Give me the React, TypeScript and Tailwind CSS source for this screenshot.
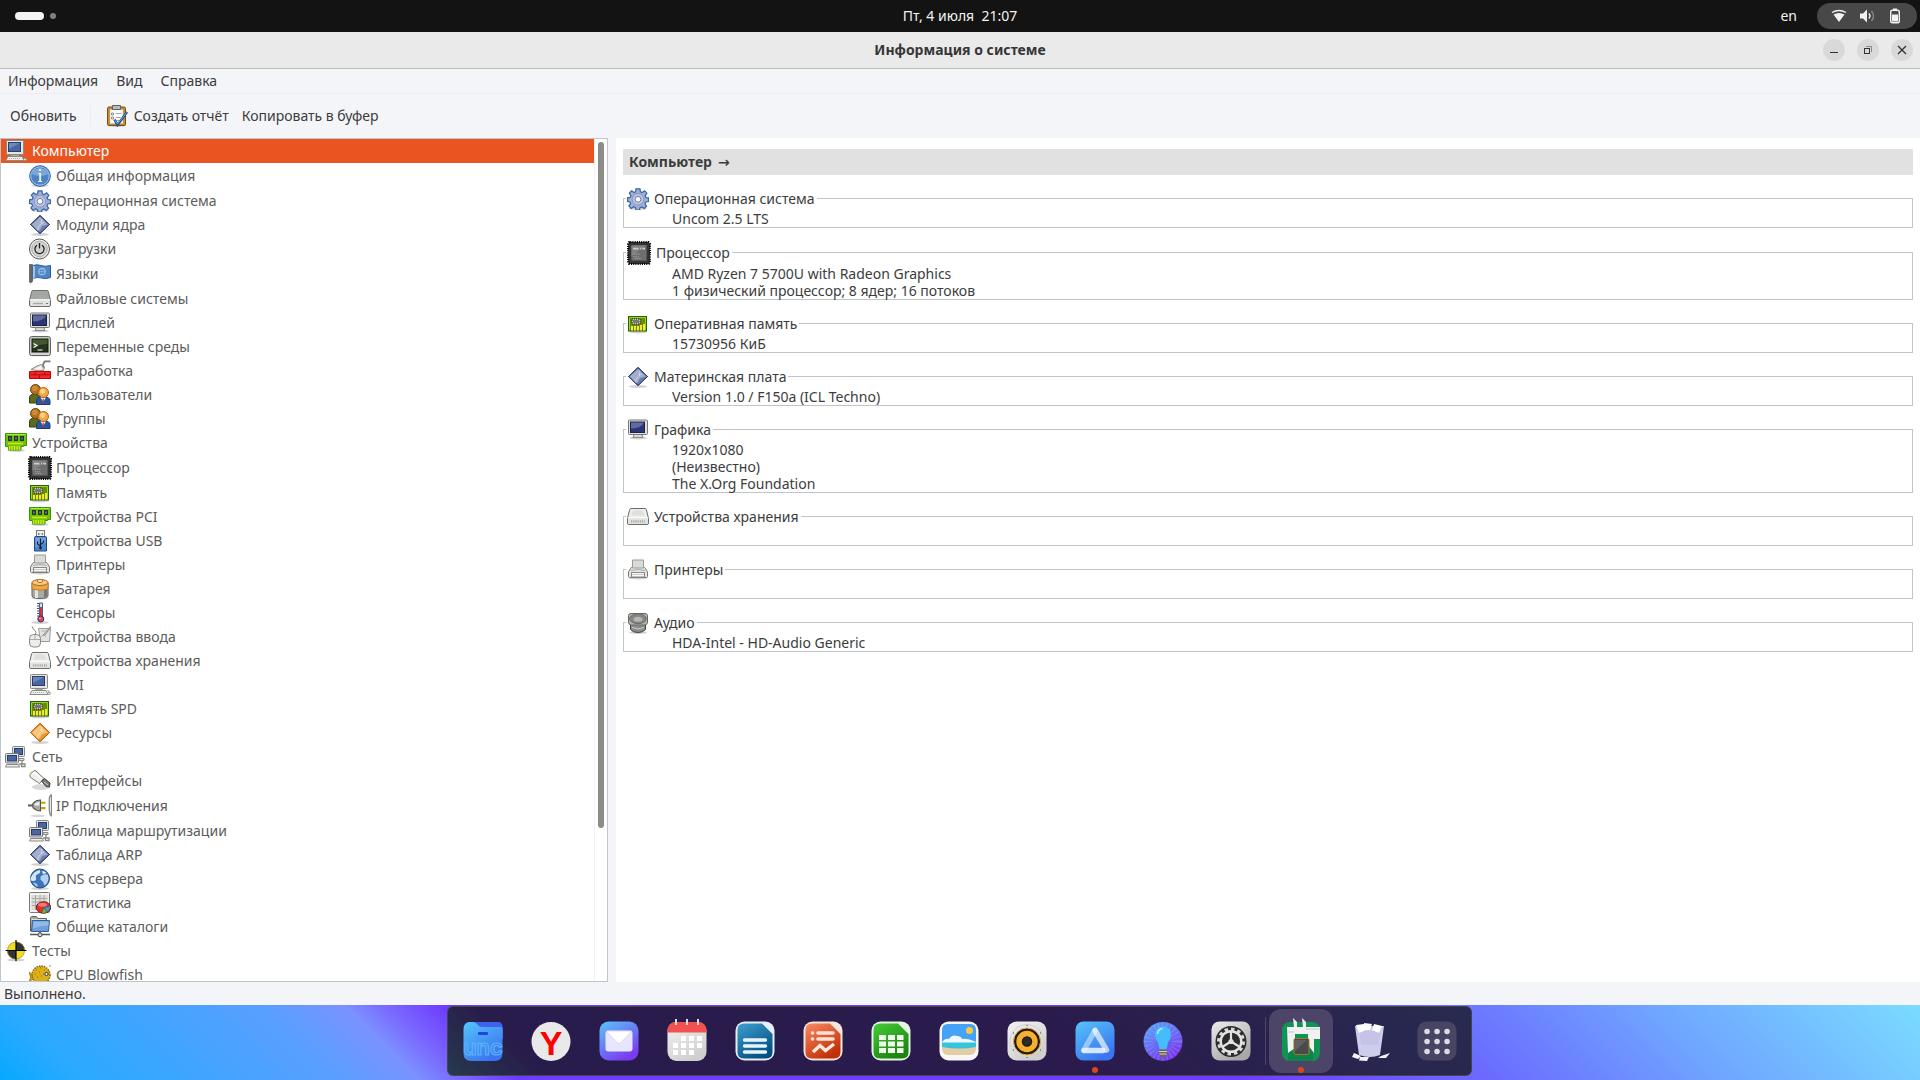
import type { ReactNode } from 'react';

type IconName = keyof typeof icons;

interface TreeItem {
  label: string;
  icon: IconName;
  top?: boolean;
  tall?: boolean;
}

interface Section {
  title: string;
  icon: IconName;
  lines: string[];
}

function Shadow({ y = 20.5 }: { y?: number }) {
  return <ellipse cx="11" cy={y} rx="9" ry="1.5" fill="#000" opacity="0.18" />;
}

function Diamond({ edge, light, dark }: { edge: string; light: string; dark: string }) {
  return (
    <>
      <Shadow />
      <path d="M11 1.5 20.5 10.5 11 19.5 1.5 10.5Z" fill={dark} stroke={edge} />
      <path d="M11 3 18.8 10.5 13 12 11 16 9 17.2 2.8 10.5Z" fill={light} />
      <path d="M13 4.5 12 9l3-1M8 16l2-4 3-3" fill="none" stroke="#fff" strokeWidth="0.8" opacity="0.6" />
      <path d="M11 1.5 20.5 10.5 11 19.5 1.5 10.5Z" fill="none" stroke={edge} />
    </>
  );
}

function Pc() {
  return (
    <>
      <rect x="1.5" y="0.5" width="17" height="14" rx="1" fill="#e6e6e1" stroke="#888a85" />
      <rect x="3.5" y="2.5" width="12" height="9" fill="#4a66a0" stroke="#2b3b6b" />
      <path d="M4 3h11L4 9Z" fill="#7d95c6" opacity="0.7" />
      <path d="M6 15h8v1.5H6Z" fill="#aaa" />
      <path d="M3 16.5h14l2 4H.8Z" fill="#eeeeec" stroke="#888a85" />
      <path d="M4 18.5h11" stroke="#aaa" strokeDasharray="1 1" />
      <path d="M18.5 16.5q2 0 2 3" fill="none" stroke="#888a85" />
      <rect x="18.5" y="18.5" width="3" height="2" rx="1" fill="#ddd" stroke="#888a85" strokeWidth="0.8" />
    </>
  );
}

function Network() {
  return (
    <>
      <rect x="7.5" y="0.5" width="12" height="10" rx="1" fill="#e6e6e1" stroke="#888a85" />
      <rect x="9.5" y="2.5" width="8" height="6" fill="#4a66a0" stroke="#2b3b6b" />
      <path d="M14 12.5h5v2h-5Z" fill="#ddd" stroke="#888a85" />
      <rect x="0.5" y="7.5" width="13" height="9.5" rx="1" fill="#e6e6e1" stroke="#777974" />
      <rect x="2.5" y="9.5" width="9" height="5.5" fill="#4a66a0" stroke="#2b3b6b" />
      <path d="M1.5 18.5h12l1 2.5H.5Z" fill="#eeeeec" stroke="#888a85" />
      <path d="M17 14v4h-3M17 18h3v2.5h-3.5V17" fill="none" stroke="#888a85" strokeWidth="1.3" />
    </>
  );
}

function Memory() {
  return (
    <>
      <Shadow y={19} />
      <rect x="1.5" y="3.5" width="18" height="14.5" fill="#6d8a06" stroke="#27610a" />
      <path d="M2.5 17V4.5h16V17" fill="none" stroke="#8fdc22" />
      <rect x="5" y="6" width="8" height="5" fill="#c9cbc6" stroke="#222" strokeDasharray="1 1" />
      <rect x="6" y="7" width="6" height="3" fill="#777974" />
      <path d="M5 13v4.5M8 13v4.5M11 13v4.5M14 12v5.5M17 11v6.5" stroke="#f5e92f" strokeWidth="2" />
    </>
  );
}

function Pci() {
  return (
    <>
      <Shadow y={18.5} />
      <path d="M.5 1.5h21v12h-3v1H16v3.500H3.500v-3.500H.5Z" fill="#6dc40c" stroke="#3f9205" />
      <path d="M1.5 2.5h19" stroke="#a6ee4c" />
      <path d="M3 4h4v5H3ZM9 4h4v5H9ZM15 4h4v5h-4Z" fill="#26352a" />
      <path d="M4.5 5.5h1v2h-1ZM10.5 5.5h1v2h-1ZM16.5 5.5h1v2h-1Z" fill="#aaa" />
      <path d="M3 11.5h15M4.5 14v4M7 14v4M9.500 14v4M12 14v4M14.5 14v4" stroke="#d6e818" strokeWidth="1.4" />
    </>
  );
}

function People() {
  return (
    <>
      <path d="M.5 19v-5q0-4 5-4 5 0 5 4v3l-4 2Z" fill="#5a6b1e" stroke="#36430b" />
      <circle cx="6.5" cy="5.5" r="5" fill="#b1701c" stroke="#6f420a" />
      <circle cx="5.8" cy="4.5" r="2.8" fill="#cf8e36" />
      <path d="M7.5 20.500V17q0-4.500 6.500-4.500 7 0 7 4.500v3.500Z" fill="#2c55a0" stroke="#1b3a78" />
      <path d="m11.5 13.500 2.700 4 2.800-4Z" fill="#fff" />
      <path d="M14.2 14.500v5" stroke="#d92b2b" strokeWidth="1.2" />
      <circle cx="14.5" cy="8.5" r="5" fill="#f3a541" stroke="#b86b12" />
      <circle cx="13.6" cy="7.3" r="2.6" fill="#fcd08c" />
    </>
  );
}

function Disk({ top }: { top: string }) {
  return (
    <>
      <path
        d="M4 2.500h14q1 0 1.300 1l2 8q.2.5.2 1V17q0 1.500-1.500 1.500H2Q.5 18.500.5 17v-4.500q0-.5.2-1l2-8q.3-1 1.300-1Z"
        fill={top}
        stroke="#6c6e6a"
      />
      <path d="M1.200 11.500h19.600V17q0 1-1 1H2.200q-1 0-1-1Z" fill="#e3e3e0" />
      <path d="M1.200 11.700h19.600" stroke="#fff" />
    </>
  );
}

const icons = {
  computer: <Pc />,
  info: (
    <>
      <Shadow />
      <circle cx="11" cy="11" r="10.300" fill="#4a84c4" stroke="#2f5f9c" />
      <circle cx="11" cy="11" r="9.200" fill="none" stroke="#a9c9ea" />
      <path d="M2.500 9a9 9 0 0 1 17 0q-8 4-17 0Z" fill="#8fb7e0" opacity="0.7" />
      <text x="11" y="17" textAnchor="middle" fontSize="18" fill="#fff" className="font-['Liberation_Serif',serif]">i</text>
    </>
  ),
  gear: (
    <>
      <Shadow />
      <path
        d="M9 .8h4l.4 3 1.800.8L17.600 2.800l2.300 2.400-1.700 2.400.8 1.900 2.500.4v3.600l-2.700.5-.8 1.800 1.600 2.400-2.300 2.300-2.400-1.600-1.900.8-.5 2.500H9l-.5-2.600-1.900-.8-2.400 1.600-2.300-2.400 1.700-2.300-.8-1.800L.5 13.400V9.800l2.600-.4.8-1.900L2.300 5.100 4.700 2.800l2.200 1.700 1.700-.7Z"
        fill="#9fb0d6"
        stroke="#3465a4"
        strokeWidth="1.2"
      />
      <circle cx="11" cy="11.300" r="5.800" fill="#c2c6dc" stroke="#8794c4" />
      <circle cx="11" cy="11.300" r="2.900" fill="#fff" stroke="#5f7db5" />
    </>
  ),
  module: <Diamond edge="#2f3f70" light="#a3aecb" dark="#6b7eb0" />,
  power: (
    <>
      <circle cx="10.5" cy="11" r="10" fill="#eeeeec" stroke="#555753" />
      <circle cx="10.5" cy="11" r="7.800" fill="#d0d0cd" stroke="#aeb0ab" />
      <path d="M8 7.200a4.600 4.600 0 1 0 5 0M10.500 5v5.500" fill="none" stroke="#222" strokeWidth="1.3" />
    </>
  ),
  flag: (
    <>
      <path d="M.5 1.500h3v17l-2 1.500-1-1Z" fill="#666" stroke="#444" strokeWidth="0.6" />
      <path d="M4 2.500q4-1.500 8 0t9.500 0v12q-5 2-9 .5t-8.500.5Z" fill="#4f87c5" stroke="#2c5c98" />
      <path d="M4 3v14l2-3V3Z" fill="#9fc2e6" />
      <circle cx="13" cy="8.500" r="3.200" fill="none" stroke="#9cc0e4" strokeWidth="1.2" />
      <path d="M10 8.500h6M13 5.500v6" stroke="#9cc0e4" strokeWidth="0.6" />
    </>
  ),
  drive: (
    <>
      <Disk top="#a5a7a3" />
      <path d="M4 15.500h10" stroke="#aaa" strokeWidth="1.5" />
      <path d="M17 15.500h2" stroke="#777" />
    </>
  ),
  display: (
    <>
      <Shadow y={19} />
      <path d="M7 15.500h8l1 3H6Z" fill="#d8d8d4" stroke="#888a85" />
      <rect x="1.5" y="1" width="19" height="14.500" rx="1" fill="#e0e0dc" stroke="#777974" />
      <rect x="3.5" y="3" width="14" height="10.500" fill="#2c3672" stroke="#1b2150" />
      <path d="M4 3.500h13Q15 9 4 9.500Z" fill="#6e78aa" opacity="0.8" />
    </>
  ),
  terminal: (
    <>
      <rect x="0.6" y="0.6" width="20.800" height="19" rx="2" fill="#d3d7cf" stroke="#555753" />
      <rect x="3" y="3" width="16" height="13" fill="#26341e" stroke="#111" />
      <path d="M3.500 3.500h15V8q-8 0-15 4Z" fill="#4b6a38" opacity="0.7" />
      <path d="m4.500 7.500 3.500 2-3.500 2M8.500 14h5" fill="none" stroke="#fff" strokeWidth="1.2" />
    </>
  ),
  develop: (
    <>
      <path d="M.5 11.500h21v7H.5Z" fill="#ef2929" stroke="#c40000" />
      <path d="M1.500 14.800h19M6 12.500v2M16 12.500v2M10.500 15.500V18" stroke="#a40000" strokeWidth="0.8" />
      <path d="M2 9.500q5-3.500 10-5l3.500 2.500-1 3.500q-5 1-12.500-1Z" fill="#dcdedb" stroke="#888a85" />
      <path d="M14.500 7.500q-1-4 1.500-6.200h5.500" fill="none" stroke="#777974" strokeWidth="1.8" />
      <path d="M12 5.500 5 9.500h8Z" fill="#fff" opacity="0.7" />
    </>
  ),
  users: <People />,
  groups: <People />,
  pci: <Pci />,
  cpu: (
    <>
      <rect x="1" y="1" width="20" height="20" rx="2" fill="#3a3a3a" stroke="#000" strokeWidth="2.4" strokeDasharray="1 1" />
      <rect x="2" y="2" width="18" height="18" rx="2" fill="#343434" />
      <rect x="4" y="4" width="14" height="14" fill="#6e6e6e" />
      <path d="M4 4h14L4 14Z" fill="#8a8a8a" opacity="0.7" />
      <path d="M5.500 7h5M12 7h1M14 7h2.500" stroke="#ccc" strokeWidth="1.5" />
      <path d="M6 12h6M6 14.500h5M7 16h6" stroke="#999" strokeDasharray="1.5 .5" />
    </>
  ),
  memory: <Memory />,
  usb: (
    <>
      <rect x="7.5" y="0.5" width="8" height="7" fill="#ededea" stroke="#777974" />
      <path d="M9 3h1.500v2H9ZM12.500 3H14v2h-1.500Z" fill="#888" />
      <path d="M5.500 7.500q0-1 1-1h10q1 0 1 1v13.500h-12Z" fill="#4f86c6" stroke="#204a87" />
      <path d="M6.500 7.500h10V13l-10 4Z" fill="#8fb6e2" opacity="0.6" />
      <path d="M11.500 8.500v10M11.500 16 8.500 14v-2.500M11.500 14.500l3-2v-2" fill="none" stroke="#10243f" strokeWidth="1.2" />
      <circle cx="11.5" cy="18" r="1.4" fill="#10243f" />
    </>
  ),
  printer: (
    <>
      <Shadow y={19} />
      <path d="M5 8.500h12q1 0 1.500 1l2 3.500v4.500q0 1-1 1h-17q-1 0-1-1V13l2-3.500q.5-1 1.500-1Z" fill="#e6e6e3" stroke="#777974" />
      <path d="M5.500 1h11v8h-11Z" fill="#d9dbd8" stroke="#9a9c97" />
      <path d="M4 11.500q7-2 14 0" fill="none" stroke="#aaa" />
      <rect x="4.5" y="13.500" width="13" height="4.500" fill="#f8f8f7" stroke="#888a85" />
      <path d="M5 15.500h12" stroke="#ccc" />
    </>
  ),
  battery: (
    <>
      <Shadow y={20} />
      <path d="M3 5v13q1 2.500 8 2.500t8-2.500V5Z" fill="#a8aaa6" stroke="#60625e" />
      <path d="M6 8v12h3V8Z" fill="#e4e4e2" />
      <path d="M15 8v12l3-2V8Z" fill="#777974" />
      <path d="M3 4.500V11q8 2.500 16 0V4.500Z" fill="#f0a740" stroke="#b4752a" strokeWidth="0.8" />
      <ellipse cx="11" cy="4.500" rx="8" ry="3" fill="#fcc780" stroke="#a8691e" />
      <ellipse cx="11" cy="3" rx="2.700" ry="1.700" fill="#ffe0ad" stroke="#b4752a" />
    </>
  ),
  sensor: (
    <>
      <Shadow y={20.5} />
      <path d="M10.500 1h3v13h-3Z" fill="#cfe0f5" stroke="#3465a4" />
      <path d="M9 1v14" stroke="#222" strokeDasharray="1 1.5" strokeWidth="1.6" />
      <path d="M12 5v10" stroke="#ef2929" strokeWidth="2" />
      <circle cx="11.800" cy="17" r="3" fill="#f23b4b" stroke="#203a78" />
      <circle cx="11" cy="16.300" r="0.9" fill="#ffb6bb" />
    </>
  ),
  input: (
    <>
      <path d="M9.500 2.500h12l-1 13h-9Z" fill="#e3e3df" stroke="#9a9c97" />
      <path d="M12 5h5M12 11q3-4 5 0" fill="none" stroke="#b4b6b1" />
      <path d="m21.500.5-6 7-1.500 2 2.500-1 5-7Z" fill="#cfcfca" stroke="#777974" strokeWidth="0.7" />
      <path d="M3 .5q1 3 3 4t0 5" fill="none" stroke="#888a85" />
      <rect x="0.5" y="8.500" width="11" height="12.500" rx="4" fill="#ededea" stroke="#888a85" />
      <path d="M1 13.500h10M6 9v4" stroke="#aaa" />
    </>
  ),
  storage: (
    <>
      <Disk top="#eeeeec" />
      <path d="M6 4.500q8-1.500 10 1l1.500 4h-13Z" fill="#dfdfdb" />
      <path d="M4 15.500h14" stroke="#aaa" strokeWidth="2.5" strokeDasharray="1.2 1" />
    </>
  ),
  resources: <Diamond edge="#c06412" light="#fac47a" dark="#f0962c" />,
  network: <Network />,
  cable: (
    <>
      <ellipse cx="12" cy="17" rx="9" ry="3" fill="#000" opacity="0.15" />
      <path d="M1 4.500 5 .8q1-.5 2 .2l8 7.500-4.500 5L1.500 7.500Q.5 6 1 4.500Z" fill="#eeeeec" stroke="#777974" />
      <path d="m2.500 4.500 2.500-2 8 6.500" fill="none" stroke="#fff" strokeWidth="1.5" />
      <path d="M3.500 1.500 1 4" stroke="#d7b53a" strokeWidth="1.2" />
      <path d="m12.500 11 3-2.500 5.500 4.500-.5 4-3.500-.5Z" fill="#777974" stroke="#3f403e" />
      <path d="m15 12 4 3" stroke="#ccc" />
    </>
  ),
  plug: (
    <>
      <ellipse cx="9" cy="20" rx="7" ry="1.200" fill="#000" opacity="0.15" />
      <path d="M0 10.500h6" stroke="#666" strokeWidth="2" />
      <path d="M4.500 8.500q3-3 7-3v10q-4 0-7-3Z" fill="#a9aba7" stroke="#555753" />
      <path d="M6 9q2-1.700 4.500-2v3.500H6Z" fill="#eee" />
      <path d="M12 8h4M12 13h4" stroke="#c4a000" strokeWidth="2" />
      <path d="M21.500.5v20M21.500.5q-2 1-2 5v9q0 4 2 6" fill="none" stroke="#888a85" strokeWidth="1.2" />
    </>
  ),
  globe: (
    <>
      <Shadow />
      <circle cx="11" cy="10.500" r="9.500" fill="#3d74b8" stroke="#204a87" />
      <path d="M2 9q3-6 9-7 1 3-2 4t-2 4-3 3-2-4Z" fill="#d6e6f6" />
      <path d="M12 8q4-3 7-1l.5 4q-1 5-4 6.500-1-4-3-5T12 8Z" fill="#b5d0ee" />
      <path d="M4 15q4-1 5 4-3-1-5-4Z" fill="#a9c9ea" />
      <path d="M13 3q3 0 4.500 2L14 6Z" fill="#eaf2fb" />
    </>
  ),
  stats: (
    <>
      <rect x="0.5" y="0.5" width="20" height="20" rx="1" fill="#f1f1ef" stroke="#777974" />
      <path d="M2.500 3h16v15h-16Z" fill="#dcdcd8" />
      <path d="M2.500 6.500h16M2.500 10h16M2.500 13.500h16M6.500 3v15M11 3v15M15 3v15" stroke="#a8aaa6" />
      <ellipse cx="14.500" cy="15.500" rx="7.300" ry="5.700" fill="#d93030" stroke="#8c1010" />
      <ellipse cx="13.500" cy="12.800" rx="4.500" ry="2" fill="#f58a8a" opacity="0.8" />
      <path d="m15 15.500 6.300-1.500q.5 4-3.500 6.500Z" fill="#5b8cc8" stroke="#27508c" strokeWidth="0.6" />
      <path d="m15 15.500 2.800 5q-3 1-5 .5Z" fill="#73c13a" stroke="#2f6d10" strokeWidth="0.6" />
    </>
  ),
  shared: (
    <>
      <path d="M1.500 15V1.500l1-1h5l1.500 2h8.500V15Z" fill="#a8aaa6" stroke="#60625e" />
      <path d="M2.500 3.500h14" stroke="#ddd" />
      <path d="M3.500 4.500h17l-1 11H2.500Z" fill="#6f9fd8" stroke="#2f5f9c" />
      <path d="M4.500 5.500h15v4q-8 0-15.500 3Z" fill="#a6c6ec" opacity="0.7" />
      <path d="M1 18.500h20M11 16v2" stroke="#555753" strokeWidth="1.5" />
      <circle cx="11" cy="18.800" r="2" fill="#ddd" stroke="#444" />
    </>
  ),
  benchmark: (
    <>
      <Shadow y={20} />
      <circle cx="11" cy="10.500" r="8.800" fill="#f2dc20" />
      <path d="M11 10.500V1.700a8.800 8.800 0 0 1 8.800 8.800ZM11 10.500v8.800a8.800 8.800 0 0 1-8.800-8.800Z" fill="#2e3436" />
      <circle cx="11" cy="10.500" r="8.500" fill="none" stroke="#8d8424" strokeWidth="0.6" />
      <path d="M11 0v21M.5 10.500h21" stroke="#000" strokeWidth="1.2" />
    </>
  ),
  blowfish: (
    <>
      <path d="M4 11 0 8l1.500 5L.5 17l4-2Z" fill="#d9a90c" stroke="#8a6a08" strokeWidth="0.7" />
      <circle cx="12" cy="11" r="9" fill="#d4a50d" stroke="#8a6a08" strokeDasharray="1.5 1" strokeWidth="1.5" />
      <circle cx="12" cy="11" r="8" fill="#dcb01a" />
      <path d="M7 6h1M11 4h1M15 6h1M6 10h1M10 8h1M14 10h1M8 13h1M12 12h1" stroke="#8a6a08" strokeWidth="1.2" />
      <circle cx="17.500" cy="10" r="1.600" fill="#fff" stroke="#333" />
      <path d="M21 1v2" stroke="#888" />
    </>
  ),
  audio: (
    <>
      <Shadow />
      <path d="M3.500 11v6.500q2.500 3 7.500 3t7.500-3V11Z" fill="#8b8d89" stroke="#444" />
      <path d="M5 15.500q6 3 12 0" fill="none" stroke="#ccc" />
      <path d="M4 1.500h14q2.500 0 2.500 2v6.500q0 3-3 3h-13q-3 0-3-3V3.500q0-2 2.500-2Z" fill="#b5b7b3" stroke="#666864" />
      <ellipse cx="11" cy="6.800" rx="8.300" ry="4.900" fill="#858783" stroke="#6a6c68" />
      <ellipse cx="11" cy="7.300" rx="4.500" ry="2.500" fill="#b4b6b2" />
    </>
  ),
  report: (
    <>
      <Shadow y={20.5} />
      <rect x="1.5" y="2" width="18" height="18.500" rx="1.500" fill="#c98a26" stroke="#7d4e0a" />
      <rect x="4" y="4.500" width="13" height="14" fill="#fff" stroke="#b9bbb7" strokeWidth="0.6" />
      <path d="M6.500.5h8v4h-8Z" fill="#b9bbb7" stroke="#60625e" />
      <path d="M5.500 8h2v2h-2ZM5.500 12h2v2h-2Z" fill="none" stroke="#777" strokeWidth="0.8" />
      <path d="M9.500 8.500h6M9.500 12.500h5M9.500 15.500h4" stroke="#aaa" />
      <path d="m8.500 14.500 3 5.500L21 7" fill="none" stroke="#27508c" strokeWidth="2.6" />
      <path d="m8.800 15 2.700 4L20.500 7.500" fill="none" stroke="#6f9fd8" />
    </>
  ),
};

const tree: TreeItem[] = [
  { label: 'Компьютер', icon: 'computer', top: true },
  { label: 'Общая информация', icon: 'info', tall: true },
  { label: 'Операционная система', icon: 'gear' },
  { label: 'Модули ядра', icon: 'module' },
  { label: 'Загрузки', icon: 'power' },
  { label: 'Языки', icon: 'flag', tall: true },
  { label: 'Файловые системы', icon: 'drive' },
  { label: 'Дисплей', icon: 'display' },
  { label: 'Переменные среды', icon: 'terminal' },
  { label: 'Разработка', icon: 'develop' },
  { label: 'Пользователи', icon: 'users' },
  { label: 'Группы', icon: 'groups' },
  { label: 'Устройства', icon: 'pci', top: true },
  { label: 'Процессор', icon: 'cpu', tall: true },
  { label: 'Память', icon: 'memory' },
  { label: 'Устройства PCI', icon: 'pci' },
  { label: 'Устройства USB', icon: 'usb' },
  { label: 'Принтеры', icon: 'printer' },
  { label: 'Батарея', icon: 'battery' },
  { label: 'Сенсоры', icon: 'sensor' },
  { label: 'Устройства ввода', icon: 'input' },
  { label: 'Устройства хранения', icon: 'storage' },
  { label: 'DMI', icon: 'computer' },
  { label: 'Память SPD', icon: 'memory' },
  { label: 'Ресурсы', icon: 'resources' },
  { label: 'Сеть', icon: 'network', top: true },
  { label: 'Интерфейсы', icon: 'cable' },
  { label: 'IP Подключения', icon: 'plug', tall: true },
  { label: 'Таблица маршрутизации', icon: 'network' },
  { label: 'Таблица ARP', icon: 'module' },
  { label: 'DNS сервера', icon: 'globe' },
  { label: 'Статистика', icon: 'stats' },
  { label: 'Общие каталоги', icon: 'shared' },
  { label: 'Тесты', icon: 'benchmark', top: true },
  { label: 'CPU Blowfish', icon: 'blowfish' },
];

const sections: Section[] = [
  { title: 'Операционная система', icon: 'gear', lines: ['Uncom 2.5 LTS'] },
  {
    title: 'Процессор',
    icon: 'cpu',
    lines: ['AMD Ryzen 7 5700U with Radeon Graphics', '1 физический процессор; 8 ядер; 16 потоков'],
  },
  { title: 'Оперативная память', icon: 'memory', lines: ['15730956 КиБ'] },
  { title: 'Материнская плата', icon: 'module', lines: ['Version 1.0 / F150a (ICL Techno)'] },
  { title: 'Графика', icon: 'display', lines: ['1920x1080', '(Неизвестно)', 'The X.Org Foundation'] },
  { title: 'Устройства хранения', icon: 'storage', lines: [''] },
  { title: 'Принтеры', icon: 'printer', lines: [''] },
  { title: 'Аудио', icon: 'audio', lines: ['HDA-Intel - HD-Audio Generic'] },
];

function Icon({ name }: { name: IconName }) {
  const size = name === 'cpu' || name === 'plug' ? 'size-6' : 'size-[22px]';
  return (
    <svg viewBox="0 0 22 22" className={`${size} shrink-0`} aria-hidden="true">
      {icons[name]}
    </svg>
  );
}

function TopBar() {
  return (
    <header className="grid h-8 shrink-0 grid-cols-3 items-center bg-[#131313] text-[#f2f2f2]">
      <button type="button" aria-label="Рабочие столы" className="flex items-center gap-1.5 pl-[15px]">
        <span className="h-2 w-[29px] rounded-full bg-[#f2f2f2]" />
        <span className="size-1.5 rounded-full bg-[#808080]" />
      </button>
      <button type="button" className="justify-self-center whitespace-pre">
        {'Пт, 4 июля  21:07'}
      </button>
      <div className="flex items-center justify-end gap-5 pr-[3px]">
        <button type="button">en</button>
        <button
          type="button"
          aria-label="Системное меню"
          className="flex h-[26px] w-[100px] items-center justify-center gap-3 rounded-full bg-[#484848]"
        >
          <svg viewBox="0 0 16 16" className="size-4">
            <path d="M1 4.500Q8 .5 15 4.500" fill="none" stroke="#f2f2f2" strokeWidth="1.4" />
            <path d="M2.500 6.500Q8 3.500 13.500 6.500L8 14Z" fill="#f2f2f2" />
          </svg>
          <svg viewBox="0 0 16 16" className="size-4">
            <path d="M1 5.500h3L8 1.500v13l-4-4H1Z" fill="#f2f2f2" />
            <path d="M10 5.500q2 2.500 0 5" fill="none" stroke="#f2f2f2" strokeWidth="1.3" />
            <path d="M12.500 3q4 5 0 10" fill="none" stroke="#8a8a8a" strokeWidth="1.3" />
          </svg>
          <svg viewBox="0 0 16 16" className="size-4">
            <path d="M6 .5h4v2H6Z" fill="#f2f2f2" />
            <rect x="3.7" y="2.2" width="8.600" height="12.600" rx="1.8" fill="none" stroke="#f2f2f2" strokeWidth="1.4" />
            <rect x="5" y="6.500" width="6" height="7" fill="#f2f2f2" />
          </svg>
        </button>
      </div>
    </header>
  );
}

function TitleBar() {
  const button = 'flex size-[22px] items-center justify-center rounded-full bg-[#d9d9d9]';
  return (
    <div className="grid h-[37px] shrink-0 grid-cols-[1fr_auto_1fr] items-center border-b border-[#bcbcbc] bg-[#eaeaea]">
      <span />
      <h1 className="font-bold text-[#363636]">Информация о системе</h1>
      <div className="flex justify-end gap-3 pr-[7px]">
        <button type="button" aria-label="Свернуть" className={button}>
          <svg viewBox="0 0 10 10" className="size-2.5">
            <path d="M1 7.500h8" stroke="#333" />
          </svg>
        </button>
        <button type="button" aria-label="Восстановить" className={button}>
          <svg viewBox="0 0 10 10" className="size-2.5">
            <path d="M3 1.500h5.500V7" fill="none" stroke="#888" />
            <rect x="1.5" y="3.5" width="5" height="5" fill="#d9d9d9" stroke="#333" />
          </svg>
        </button>
        <button type="button" aria-label="Закрыть" className={button}>
          <svg viewBox="0 0 10 10" className="size-2.5">
            <path d="m1 1 8 8M9 1 1 9" stroke="#333" strokeWidth="1.3" />
          </svg>
        </button>
      </div>
    </div>
  );
}

function Sidebar() {
  return (
    <nav className="flex w-[608px] shrink-0 border border-[#c0c4cc] bg-white">
      <ul className="min-h-0 flex-1 overflow-hidden">
        {tree.map((item, index) => (
          <li key={index}>
            <button
              type="button"
              className={`flex w-full items-center gap-1 ${item.tall ? 'h-[26px]' : 'h-6'} ${
                item.top ? 'pl-[3px]' : 'pl-[27px]'
              } ${index === 0 ? 'bg-[#e95420] text-white' : 'text-[#5c5c5c]'}`}
            >
              <span className="flex w-6 justify-center">
                <Icon name={item.icon} />
              </span>
              {item.label}
            </button>
          </li>
        ))}
      </ul>
      <div className="flex w-[13px] justify-center border-l border-[#f0f1f3] py-[3px]">
        <div className="h-[82%] w-1.5 rounded-full bg-[#8b8b89]" />
      </div>
    </nav>
  );
}

function Details() {
  return (
    <main className="ml-2 min-w-0 flex-1 bg-white px-[7px] pt-[11px] text-[#3c3c3c]">
      <h2 className="mb-3 flex h-[26px] items-center gap-1.5 bg-[#e1e1e1] px-1.5 font-bold">
        Компьютер <span className="font-['DejaVu_Sans',sans-serif]">→</span>
      </h2>
      {sections.map((section) => (
        <fieldset key={section.title} className="mb-3 border border-[#c0c4cc]">
          <legend className="ml-0.5 flex items-center gap-[5px] pt-px pr-0.5 pl-px">
            <Icon name={section.icon} />
            {section.title}
          </legend>
          {section.lines.map((line, index) => (
            <p key={index} className="h-[17px] pl-12 leading-[17px]">
              {line}
            </p>
          ))}
        </fieldset>
      ))}
    </main>
  );
}

const dockApps: { name: string; running?: boolean; art: ReactNode }[] = [
  {
    name: 'Файлы',
    art: (
      <>
        <path d="M4 1h32q4 1 4 7v10H4Z" fill="#3d63ee" />
        <path d="M.5 8q0-7 7-7h3q2 0 4 2.500t4 2.500h19q2 0 2 3v23q0 8-8 8h-23q-8 0-8-8Z" fill="url(#blue)" />
        <rect x="15" y="11" width="10" height="3" rx="1" fill="#2444d8" />
        <text x="20" y="34" textAnchor="middle" fontSize="22" fontWeight="600" fill="none" stroke="#58b4fb" strokeWidth="1.2" className="font-[Inter,sans-serif]">unc</text>
      </>
    ),
  },
  {
    name: 'Яндекс Браузер',
    art: (
      <>
        <circle cx="20" cy="20.5" r="19.5" fill="#e9e9e9" />
        <text x="20" y="34" textAnchor="middle" fontSize="34" fontWeight="700" fill="#f00" className="font-['Liberation_Sans',sans-serif]">Y</text>
      </>
    ),
  },
  {
    name: 'Почта',
    art: (
      <>
        <rect x="0.5" y="0.5" width="39" height="39" rx="9" fill="url(#mail)" />
        <rect x="6.5" y="9.5" width="27" height="21" rx="3" fill="#e8e6ff" />
        <path d="M7 10h26L22 21.500q-2 2-4 0Z" fill="#fff" stroke="#c9c4f2" strokeWidth="0.6" />
      </>
    ),
  },
  {
    name: 'Календарь',
    art: (
      <>
        <rect x="0.5" y="1" width="39" height="39" rx="9" fill="url(#grey)" />
        <path d="M.5 11.500V10q0-9 9-9h21q9 0 9 9v1.500Z" fill="#f2524f" />
        <path d="M9-2v6M20-2v6M31-2v6" stroke="#ddd" strokeWidth="2" />
        <path
          d="M14 15h5v5h-5ZM22 15h5v5h-5ZM30 15h5v5h-5ZM6 22h5v5H6ZM14 22h5v5h-5ZM22 22h5v5h-5ZM30 22h5v5h-5ZM6 29h5v5H6ZM14 29h5v5h-5ZM22 29h5v5h-5Z"
          fill="#fff"
        />
      </>
    ),
  },
  {
    name: 'Writer',
    art: (
      <>
        <rect x="0.5" y="0.5" width="39" height="39" rx="9" fill="#e6eff5" />
        <path d="M9 2.500h18L37.500 13v18q0 6.500-6.500 6.500H9q-6.500 0-6.500-6.500V9Q2.500 2.500 9 2.500Z" fill="url(#writer)" />
        <path d="M9.500 19h21M9.500 25h21M9.500 31h21" stroke="#e8f4fb" strokeWidth="3.4" strokeLinecap="round" />
      </>
    ),
  },
  {
    name: 'Impress',
    art: (
      <>
        <rect x="0.5" y="0.5" width="39" height="39" rx="9" fill="#f8e4dc" />
        <path d="M9 2.500h18L37.500 13v18q0 6.500-6.500 6.500H9q-6.500 0-6.500-6.500V9Q2.500 2.500 9 2.500Z" fill="url(#impress)" />
        <path d="M15 12h15M15 18h15M9.500 12h.1M9.500 18h.1" stroke="#ffe2d6" strokeWidth="3.6" strokeLinecap="round" />
        <path d="m10 31 7-6.500 5.500 5L31 23" fill="none" stroke="#ffe8de" strokeWidth="3.4" />
      </>
    ),
  },
  {
    name: 'Calc',
    art: (
      <>
        <rect x="0.5" y="0.5" width="39" height="39" rx="9" fill="#e4f5e0" />
        <path d="M9 2.500h18L37.500 13v18q0 6.500-6.500 6.500H9q-6.500 0-6.500-6.500V9Q2.500 2.500 9 2.500Z" fill="url(#calc)" />
        <path
          d="M8 14h7v5H8ZM17 14h7v5h-7ZM26 14h6.500v5H26ZM8 20.500h7v5H8ZM17 20.500h7v5h-7ZM26 20.500h6.500v5H26ZM8 27h7v5H8ZM17 27h7v5h-7ZM26 27h6.500v5H26Z"
          fill="#eefaea"
        />
      </>
    ),
  },
  {
    name: 'Фотографии',
    art: (
      <>
        <rect x="0.5" y="0.5" width="39" height="39" rx="9" fill="#f7f7f7" />
        <rect x="3" y="3" width="34" height="31" rx="6" fill="#e3cda6" />
        <path d="M3 24V9q0-6 6-6h22q6 0 6 6v15Z" fill="#45a3f7" />
        <path d="M3 21q3-4 7-3 3-5 8-3 4 0 5 3 5-1 14 3v3H3Z" fill="#eff8ff" />
        <path d="M3 21.500h34V26q-17 3-34 0Z" fill="#35c4dc" />
        <circle cx="30.5" cy="9.5" r="3.5" fill="#fdc93e" />
      </>
    ),
  },
  {
    name: 'Ритмбокс',
    art: (
      <>
        <rect x="0.5" y="0.5" width="39" height="39" rx="9" fill="url(#grey)" />
        <circle cx="20" cy="20.5" r="17" fill="none" stroke="#cfcfcf" />
        <circle cx="20" cy="20.5" r="13.5" fill="#1c1a16" stroke="#f2b233" />
        <circle cx="20" cy="20.5" r="8" fill="none" stroke="#f8b02c" strokeWidth="5.5" />
        <circle cx="20" cy="20.5" r="4" fill="#2b2b2b" />
        <path d="M20 4v1M20 36v1M6 12h1M33 12h1M6 29h1M33 29h1" stroke="#777" strokeWidth="1.5" />
      </>
    ),
  },
  {
    name: 'Центр приложений',
    running: true,
    art: (
      <>
        <rect x="0.5" y="0.5" width="39" height="39" rx="8" fill="url(#blue)" />
        <path d="M20 9.500 9 29" stroke="#cbe8ff" strokeWidth="5.5" strokeLinecap="round" opacity="0.6" />
        <path d="M20 9.500 31.500 29" stroke="#fff" strokeWidth="5.5" strokeLinecap="round" opacity="0.65" />
        <path d="M9 29.500h19" stroke="#f0f8ff" strokeWidth="5.5" strokeLinecap="round" opacity="0.85" />
      </>
    ),
  },
  {
    name: 'Советы',
    art: (
      <>
        <circle cx="20" cy="20.5" r="19.5" fill="url(#tips)" />
        <circle cx="20" cy="20.5" r="14" fill="none" stroke="#b9c7ff" strokeWidth="10" strokeDasharray="0.8 2.8" opacity="0.3" />
        <path d="M12 14q0-8.500 8-8.500t8 8.500q0 4-3 7.500l-1.500 7h-7l-1.500-7q-3-3.500-3-7.500Z" fill="#45bcfb" />
        <path d="M14.500 13q.5-5 5-5.500" fill="none" stroke="#b5e6ff" strokeWidth="1.6" />
        <path d="M16 28.500h8v5l-2.500 3h-3l-2.500-3Z" fill="#6f6563" />
        <path d="M16 30.500h8M16.500 33h7" stroke="#ddd0b8" />
      </>
    ),
  },
  {
    name: 'Настройки',
    art: (
      <>
        <rect x="0.5" y="0.5" width="39" height="39" rx="8" fill="url(#steel)" />
        <circle cx="20" cy="20.5" r="15.5" fill="#2c2c2c" />
        <circle cx="20" cy="20.5" r="12.5" fill="none" stroke="#d9d9d9" strokeWidth="3" strokeDasharray="3.500 3" />
        <circle cx="20" cy="20.5" r="10.300" fill="none" stroke="#e3e3e3" strokeWidth="2.4" />
        <path d="M20 20.500V11M20 20.500l-8 5M20 20.500l8 5" stroke="#e3e3e3" strokeWidth="2.2" />
        <circle cx="20" cy="20.5" r="2.600" fill="#e3e3e3" />
      </>
    ),
  },
];

function Gradient({ id, from, to }: { id: string; from: string; to: string }) {
  return (
    <linearGradient id={id} x1="0" y1="0" x2="0.6" y2="1">
      <stop offset="0" stopColor={from} />
      <stop offset="1" stopColor={to} />
    </linearGradient>
  );
}

function DockButton({ name, running, children }: { name: string; running?: boolean; children: ReactNode }) {
  return (
    <button type="button" title={name} aria-label={name} className="relative flex h-full w-[68px] items-center justify-center">
      <svg viewBox="0 0 40 40" className="size-10 overflow-visible">
        {children}
      </svg>
      {running && <span className="absolute bottom-0.5 size-1.5 rounded-full bg-[#d9481c]" />}
    </button>
  );
}

function Dock() {
  return (
    <footer className="flex h-[75px] shrink-0 justify-center bg-[linear-gradient(45deg,#08a8ff,#2aaaff_4%,#3fa5ff_10%,#5a9fff_17%,#7a92ff_21%,#7a6aff_23%,#6f3bff_26%,#6f3bff_62%,#6b6cff_75%,#6fa8ff_87%,#7adcff)] pt-px pr-0.5">
      <svg className="absolute size-0" aria-hidden="true">
        <defs>
          <Gradient id="blue" from="#56c5fb" to="#3a74f0" />
          <Gradient id="mail" from="#58c6fa" to="#7a3bf0" />
          <Gradient id="grey" from="#f2f2f2" to="#cfcfcf" />
          <Gradient id="steel" from="#ececec" to="#a8a8a8" />
          <Gradient id="writer" from="#3d9fd0" to="#045082" />
          <Gradient id="impress" from="#f98a62" to="#bf3008" />
          <Gradient id="calc" from="#44cc38" to="#1c8410" />
          <Gradient id="tips" from="#55aef8" to="#7a38ee" />
        </defs>
      </svg>
      <div className="flex h-[70px] items-center rounded-md border border-[#45434c] bg-[linear-gradient(45deg,#263a4c,#281c4c_9%,#2a1b4c_60%,#282b50)] px-px">
        {dockApps.map((app) => (
          <DockButton key={app.name} name={app.name} running={app.running}>
            {app.art}
          </DockButton>
        ))}
        <div className="h-12 w-px bg-[#4f4765]" />
        <div className="mx-[3px] h-16 rounded-xl bg-[#4d4568]">
          <button type="button" aria-label="Информация о системе" className="relative flex h-full w-16 items-center justify-center">
            <svg viewBox="0 0 40 40" className="size-10 overflow-visible">
              <rect x="1" y="1" width="38" height="39" rx="8" fill="#109455" />
              <path d="M7 40V24h25v16Z" fill="#0b7441" opacity="0.5" />
              <path d="M6 6h7l-1-9 4 4v5h6l-1-9 4 4v5h14v12h-6v14l-6-8V13H14v14L7 32Z" fill="#f1f1f1" />
              <path d="M25 8h14M7 11h6" stroke="#c7c7c7" />
              <rect x="13" y="17.500" width="15" height="16" rx="1.5" fill="#4a4a4a" stroke="#a07a30" />
              <path d="M14 19h12L14 30Z" fill="#6b6b6b" opacity="0.7" />
            </svg>
            <span className="absolute bottom-0 size-1.5 rounded-full bg-[#d9481c]" />
          </button>
        </div>
        <DockButton name="Корзина">
          <path d="M5 5h29l-4 29q-10 4-21 0Z" fill="#d8d6f4" opacity="0.95" />
          <path d="M9 10h22l-3 14H11Z" fill="#bdb9e2" opacity="0.5" />
          <path d="m6 4 8-1 2 6-7 3ZM14 2l8 1-2 6h-5ZM24 3l8 2-3 7-7-3Z" fill="#fff" />
          <path d="m4 32 7 3-3 3-6-2ZM10 36l9 0-2 4-8-.5ZM31 35l9-3-4 5-8 0Z" fill="#f3f3fb" />
        </DockButton>
        <button type="button" aria-label="Показать приложения" className="flex w-[66px] items-center justify-center">
          <svg viewBox="0 0 40 40" className="size-10">
            <rect x="0.5" y="0.5" width="39" height="39" rx="9" fill="#484464" />
            <path
              d="M10 10.500h.1M20 10.500h.1M30 10.500h.1M10 20.500h.1M20 20.500h.1M30 20.500h.1M10 30.500h.1M20 30.500h.1M30 30.500h.1"
              stroke="#dcdce4"
              strokeWidth="5.5"
              strokeLinecap="round"
            />
          </svg>
        </button>
      </div>
    </footer>
  );
}

function App() {
  return (
    <div className="flex h-screen flex-col overflow-hidden bg-[#f4f5f8] font-['Noto_Sans','Open_Sans',sans-serif] text-[14px] leading-4 text-[#3c3c3c]">
      <TopBar />
      <TitleBar />
      <div className="flex h-[25px] shrink-0 items-center gap-[18px] border-b border-[#eceef0] pl-2">
        <button type="button">Информация</button>
        <button type="button">Вид</button>
        <button type="button">Справка</button>
      </div>
      <div className="flex h-11 shrink-0 items-center gap-[13px] pl-2.5">
        <button type="button">Обновить</button>
        <div className="h-5 w-px bg-[#ebecef]" />
        <button type="button" className="flex items-center gap-1.5 pl-0.5">
          <Icon name="report" />
          Создать отчёт
        </button>
        <button type="button">Копировать в буфер</button>
      </div>
      <div className="flex min-h-0 flex-1">
        <Sidebar />
        <Details />
      </div>
      <div className="flex h-[23px] shrink-0 items-center pl-1">Выполнено.</div>
      <Dock />
    </div>
  );
}

export default App;
